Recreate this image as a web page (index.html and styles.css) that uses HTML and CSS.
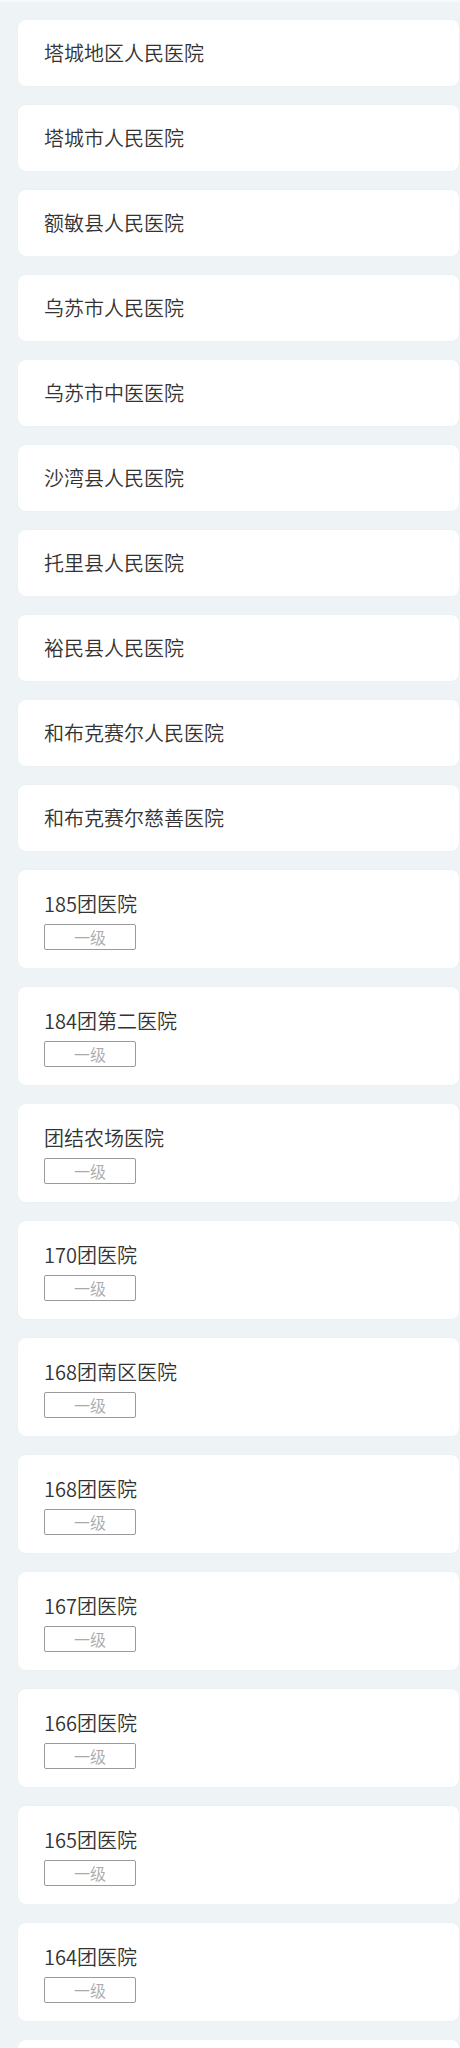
FILE: index.html
```html
<!DOCTYPE html>
<html lang="zh">
<head>
<meta charset="utf-8">
<link rel="stylesheet" href="styles.css">
</head>
<body>
<div class="topbar"></div>
<ul class="list">
  <li class="card"><div class="name">塔城地区人民医院</div></li>
  <li class="card"><div class="name">塔城市人民医院</div></li>
  <li class="card"><div class="name">额敏县人民医院</div></li>
  <li class="card"><div class="name">乌苏市人民医院</div></li>
  <li class="card"><div class="name">乌苏市中医医院</div></li>
  <li class="card"><div class="name">沙湾县人民医院</div></li>
  <li class="card"><div class="name">托里县人民医院</div></li>
  <li class="card"><div class="name">裕民县人民医院</div></li>
  <li class="card"><div class="name">和布克赛尔人民医院</div></li>
  <li class="card"><div class="name">和布克赛尔慈善医院</div></li>
  <li class="card card-tag"><div class="name">185团医院</div><span class="tag">一级</span></li>
  <li class="card card-tag"><div class="name">184团第二医院</div><span class="tag">一级</span></li>
  <li class="card card-tag"><div class="name">团结农场医院</div><span class="tag">一级</span></li>
  <li class="card card-tag"><div class="name">170团医院</div><span class="tag">一级</span></li>
  <li class="card card-tag"><div class="name">168团南区医院</div><span class="tag">一级</span></li>
  <li class="card card-tag"><div class="name">168团医院</div><span class="tag">一级</span></li>
  <li class="card card-tag"><div class="name">167团医院</div><span class="tag">一级</span></li>
  <li class="card card-tag"><div class="name">166团医院</div><span class="tag">一级</span></li>
  <li class="card card-tag"><div class="name">165团医院</div><span class="tag">一级</span></li>
  <li class="card card-tag"><div class="name">164团医院</div><span class="tag">一级</span></li>
  <li class="card card-tag"></li>
</ul>
</body>
</html>
```

FILE: styles.css
```css
html, body {
  margin: 0;
  padding: 0;
  background: #eef3f6;
  font-family: "Noto Sans CJK SC", "Noto Sans", sans-serif;
}
.topbar {
  height: 2px;
  background: #f6f8fa;
}
.list {
  list-style: none;
  margin: 0;
  padding: 18px 1px 0 18px;
  display: flex;
  flex-direction: column;
  gap: 19px;
}
.card {
  background: #ffffff;
  border-radius: 8px;
  box-shadow: 0 0 2px rgba(0, 0, 0, 0.04);
  padding: 20px 26px;
  height: 66px;
  box-sizing: border-box;
}
.name {
  font-size: 20px;
  line-height: 26px;
  font-weight: 350;
  color: #333333;
}
.card-tag {
  height: 98px;
  padding-top: 20px;
  display: flex;
  flex-direction: column;
  align-items: flex-start;
}
.card-tag .name {
  line-height: 28px;
}
.tag {
  margin-top: 6px;
  box-sizing: border-box;
  width: 92px;
  height: 26px;
  border: 1px solid #9a9a9a;
  border-radius: 2px;
  font-size: 16px;
  line-height: 24px;
  font-weight: 350;
  color: #aaaaaa;
  text-align: center;
}
```
